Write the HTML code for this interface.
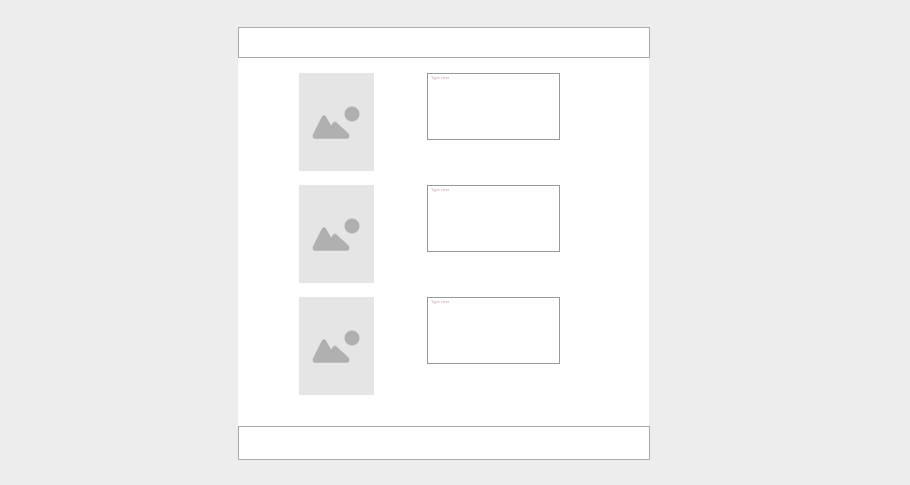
<!DOCTYPE html>
<html><head><style>
body{margin:0;width:910px;height:485px;background:#ededed;position:relative;overflow:hidden;font-family:"Liberation Sans",sans-serif}
.page{position:absolute;left:238px;top:27px;width:411px;height:432px;background:#fff}
.hdr{position:absolute;left:238px;top:27px;width:410px;height:29px;border:1px solid #aaa;background:#fff}
.ftr{position:absolute;left:238px;top:426px;width:410px;height:32px;border:1px solid #aaa;background:#fff}
.img{position:absolute;left:299px;width:75px;height:98px;background:#e5e5e5}
.img svg{position:absolute;left:0;top:0}
.tb{position:absolute;left:427px;width:131px;height:65px;border:1px solid #999;background:#fff}
.tb span{position:absolute;left:3px;top:1px;font-size:4px;color:#c9a0a8}
</style></head><body>
<div class="page"></div>
<div class="hdr"></div>
<div class="ftr"></div>
<div class="img" style="top:73px"><svg width="75" height="98"><circle cx="53" cy="41" r="7.5" fill="#b0b0b0"/><path d="M15 61 L23 45 Q25 41 27 45 L32 54 L34 51 Q36 48 38 51 L49 61 Q51 65 47 65 L17 65 Q13 65 15 61Z" fill="#b0b0b0" stroke="#b0b0b0" stroke-width="1.5" stroke-linejoin="round"/></svg></div>
<div class="img" style="top:185px"><svg width="75" height="98"><circle cx="53" cy="41" r="7.5" fill="#b0b0b0"/><path d="M15 61 L23 45 Q25 41 27 45 L32 54 L34 51 Q36 48 38 51 L49 61 Q51 65 47 65 L17 65 Q13 65 15 61Z" fill="#b0b0b0" stroke="#b0b0b0" stroke-width="1.5" stroke-linejoin="round"/></svg></div>
<div class="img" style="top:297px"><svg width="75" height="98"><circle cx="53" cy="41" r="7.5" fill="#b0b0b0"/><path d="M15 61 L23 45 Q25 41 27 45 L32 54 L34 51 Q36 48 38 51 L49 61 Q51 65 47 65 L17 65 Q13 65 15 61Z" fill="#b0b0b0" stroke="#b0b0b0" stroke-width="1.5" stroke-linejoin="round"/></svg></div>
<div class="tb" style="top:73px"><span>Type Here</span></div>
<div class="tb" style="top:185px"><span>Type Here</span></div>
<div class="tb" style="top:297px"><span>Type Here</span></div>
</body></html>
